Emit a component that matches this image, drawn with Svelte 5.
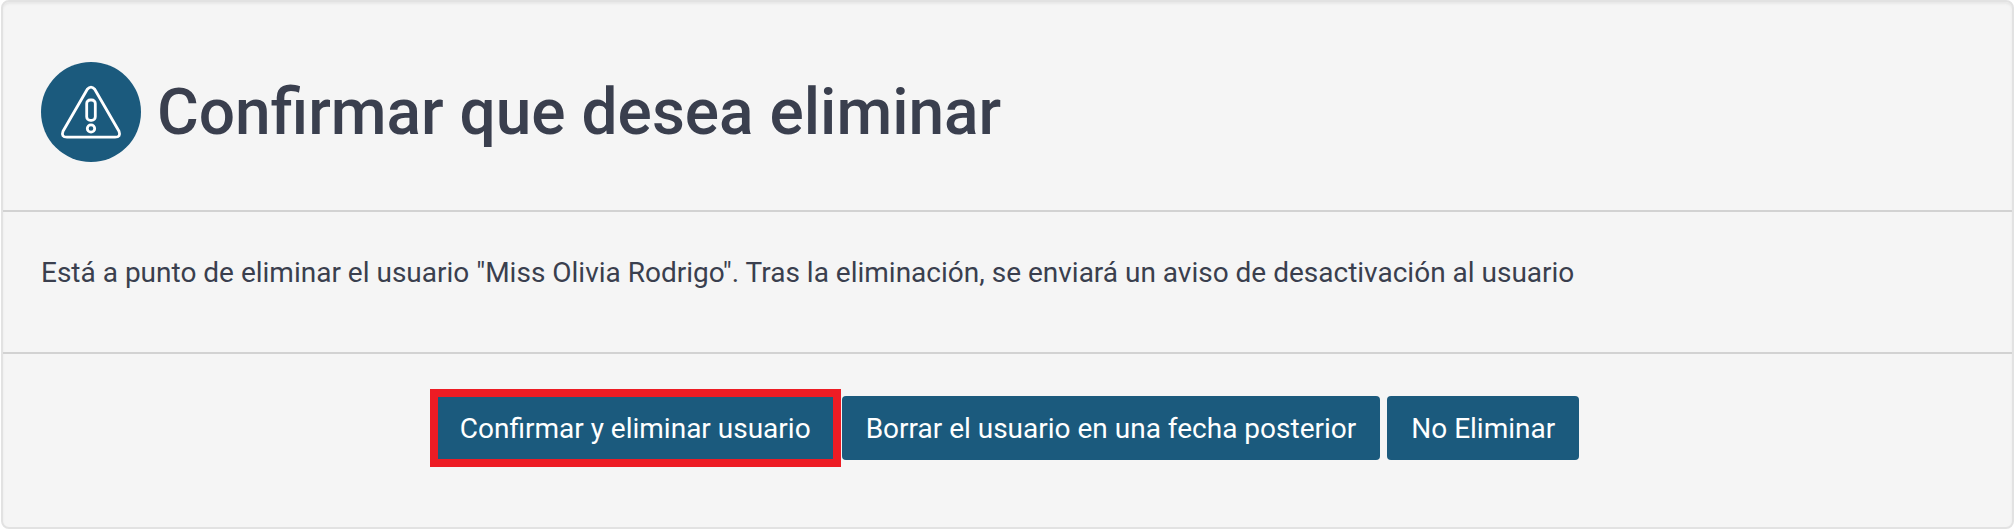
<script lang="ts">
	interface Action {
		label: string;
		highlighted?: boolean;
	}

	let userName = $state('Miss Olivia Rodrigo');

	const actions: Action[] = [
		{ label: 'Confirmar y eliminar usuario', highlighted: true },
		{ label: 'Borrar el usuario en una fecha posterior' },
		{ label: 'No Eliminar' }
	];
</script>

<section class="card" aria-labelledby="confirm-title">
	<header class="card-header">
		<svg class="icon" viewBox="0 0 100 100" aria-hidden="true">
			<circle cx="50" cy="50" r="50" fill="#1b5a7d" />
			<g fill="none" stroke="#fff" stroke-width="2.8" stroke-linejoin="round">
				<path
					d="M46.3 27.2 L22 69.2 Q19.8 75.2 26 75.2 H74 Q80.2 75.2 78 69.2 L53.7 27.2 Q50 23 46.3 27.2 Z"
				/>
				<rect x="45.7" y="38" width="8.6" height="20.3" rx="3.6" />
				<circle cx="50" cy="66.5" r="3.7" />
			</g>
		</svg>
		<h1 id="confirm-title">Confirmar que desea eliminar</h1>
	</header>

	<div class="card-body">
		<p>
			Está a punto de eliminar el usuario "{userName}". Tras la eliminación, se enviará un aviso
			de desactivación al usuario
		</p>
	</div>

	<footer class="card-footer">
		{#each actions as action}
			<button type="button" class:highlighted={action.highlighted}>{action.label}</button>
		{/each}
	</footer>
</section>

<style>
	:global(body) {
		background: #fff;
	}

	.card {
		margin: 0 0 0 1px;
		font-family: Roboto, 'Liberation Sans', sans-serif;
		color: #3a3f4e;
		background: #f5f5f5;
		border: 2px solid #e2e2e2;
		border-radius: 8px;
		box-shadow: inset 0 2px 2px #e8e8e8;
	}

	.card-header {
		display: flex;
		align-items: center;
		gap: 16px;
		padding: 60px 38px 48px;
		border-bottom: 2px solid #d2d2d2;
	}

	.icon {
		flex: none;
		width: 100px;
		height: 100px;
	}

	h1 {
		margin: 0;
		padding-top: 2px;
		font-size: 64px;
		font-weight: 500;
		line-height: 72px;
	}

	.card-body {
		padding: 41px 38px 59px;
		border-bottom: 2px solid #d2d2d2;
	}

	p {
		margin: 0;
		font-size: 28px;
		line-height: 40px;
	}

	.card-footer {
		display: flex;
		flex-wrap: wrap;
		justify-content: center;
		gap: 7px;
		padding: 42px 38px 67px;
	}

	button {
		position: relative;
		padding: 13px 24px 11px;
		font-family: inherit;
		font-size: 28px;
		line-height: 40px;
		color: #fff;
		background: #1b5a7d;
		border: 0;
		border-radius: 4px;
		cursor: pointer;
	}

	button:hover {
		background: #174d6b;
	}

	/* frame drawn round the recommended action */
	.highlighted::after {
		content: '';
		position: absolute;
		inset: -7px -6px;
		z-index: 1;
		border: 8px solid #ed1c24;
		pointer-events: none;
	}
</style>
